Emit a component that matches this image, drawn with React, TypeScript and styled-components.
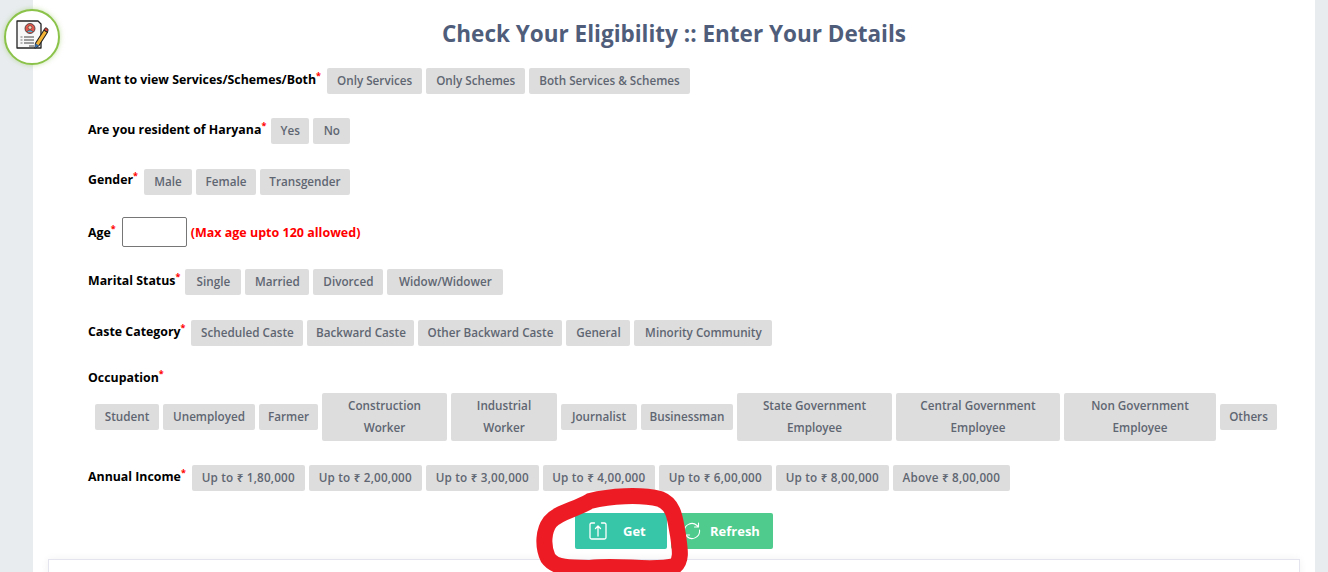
import React from "react";
import styled, { createGlobalStyle } from "styled-components";

const Global = createGlobalStyle`
  html, body { margin: 0; padding: 0; height: 572px; overflow: hidden; background: #e8ecef; }
  #root { height: 572px; overflow: hidden; }
`;

const Page = styled.div`
  position: relative;
  height: 572px;
  padding: 0 13px 0 33px;
  font-family: "Open Sans", "Noto Sans", sans-serif;
  overflow: hidden;
`;

const Card = styled.main`
  background: #fff;
  height: 572px;
  padding-top: 17px;
`;

const Title = styled.h1`
  margin: 0;
  height: 34px;
  line-height: 34px;
  font-size: 22.5px;
  font-weight: 700;
  color: #4f5d7b;
  text-align: center;
`;

const Form = styled.div`
  padding: 17px 0 0 55px;
`;

const Row = styled.div<{ $gap?: number; $h?: number }>`
  display: flex;
  align-items: center;
  height: ${(p) => p.$h ?? 26}px;
  margin-bottom: ${(p) => p.$gap ?? 24}px;
`;

const Label = styled.label<{ $mr?: number; $top?: number }>`
  font-size: 12.35px;
  font-weight: 700;
  color: #000;
  margin-right: ${(p) => p.$mr ?? 6}px;
  position: relative;
  top: ${(p) => p.$top ?? -2}px;
  white-space: nowrap;
`;

const Star = styled.sup`
  color: #f00;
  font-size: 9px;
  line-height: 0;
`;

const Choice = styled.button<{ $w?: number }>`
  border: 0;
  border-radius: 2px;
  background: #dddddd;
  color: #5f6672;
  font-family: inherit;
  font-size: 11.7px;
  font-weight: 600;
  line-height: 22px;
  padding: 1px ${(p) => (p.$w ? 6 : 10)}px 3px;
  margin: 0 4px 0 0;
  white-space: ${(p) => (p.$w ? "normal" : "nowrap")};
  width: ${(p) => (p.$w ? `${p.$w}px` : "auto")};
  flex: none;
`;

const MoneyChoice = styled(Choice)`
  letter-spacing: 0.2px;
  white-space: nowrap;
`;

const AgeInput = styled.input`
  box-sizing: border-box;
  width: 65px;
  height: 30px;
  border: 1px solid #767676;
  border-radius: 2px;
  background: #fff;
  margin-right: 4px;
`;

const Hint = styled.span`
  color: #f00;
  font-size: 12.5px;
  font-weight: 700;
`;

const OccupationBlock = styled.div`
  margin-bottom: 24px;
`;

const OccupationLabel = styled.div`
  height: 21px;
  margin-top: 25px;
  display: flex;
  align-items: flex-start;
`;

const OccupationRow = styled.div`
  display: flex;
  align-items: center;
  padding-left: 7px;
  height: 49px;
`;

const Actions = styled.div`
  display: flex;
  gap: 4px;
  margin: 22px 0 0 487px;
`;

const Action = styled.button<{ $bg: string; $w: number; $pad: number; $gap: number }>`
  display: flex;
  align-items: center;
  gap: ${(p) => p.$gap}px;
  box-sizing: border-box;
  width: ${(p) => p.$w}px;
  height: 36px;
  border: 0;
  border-radius: 2px;
  background: ${(p) => p.$bg};
  color: #fff;
  font-family: inherit;
  font-size: 13px;
  font-weight: 700;
  padding: 0 0 0 ${(p) => p.$pad}px;
`;

const Panel = styled.section`
  height: 60px;
  margin: 10px 15px 0;
  background: #fff;
  border: 1px solid #e4e4ee;
  box-shadow: 0 0 8px rgba(0, 0, 0, 0.06);
`;

const Badge = styled.div`
  position: absolute;
  left: 4px;
  top: 9px;
  width: 56px;
  height: 56px;
  box-sizing: border-box;
  border: 2px solid #8bc34a;
  border-radius: 50%;
  background: #fff;
  box-shadow: 0 0 5px rgba(139, 195, 74, 0.5);
  display: flex;
  align-items: center;
  justify-content: center;
`;

const Scribble = styled.svg`
  position: absolute;
  left: 520px;
  top: 480px;
  pointer-events: none;
`;

const req = <Star>*</Star>;

const incomes: [string, number][] = [
  ["1,80,000", 113],
  ["2,00,000", 113],
  ["3,00,000", 113],
  ["4,00,000", 112],
  ["6,00,000", 113],
  ["8,00,000", 113],
];

export default function App() {
  return (
    <Page>
      <Global />
      <Card>
        <Title>Check Your Eligibility :: Enter Your Details</Title>
        <Form>
          <Row>
            <Label>Want to view Services/Schemes/Both{req}</Label>
            <Choice>Only Services</Choice>
            <Choice>Only Schemes</Choice>
            <Choice>Both Services &amp; Schemes</Choice>
          </Row>
          <Row>
            <Label $mr={5}>Are you resident of Haryana{req}</Label>
            <Choice $w={38}>Yes</Choice>
            <Choice $w={37}>No</Choice>
          </Row>
          <Row $h={27} $gap={22}>
            <Label>Gender{req}</Label>
            <Choice $w={48}>Male</Choice>
            <Choice $w={60}>Female</Choice>
            <Choice $w={90}>Transgender</Choice>
          </Row>
          <Row $h={30} $gap={22}>
            <Label $top={0}>Age{req}</Label>
            <AgeInput />
            <Hint>(Max age upto 120 allowed)</Hint>
          </Row>
          <Row $gap={25}>
            <Label $mr={5}>Marital Status{req}</Label>
            <Choice $w={56}>Single</Choice>
            <Choice $w={64}>Married</Choice>
            <Choice $w={70}>Divorced</Choice>
            <Choice $w={116}>Widow/Widower</Choice>
          </Row>
          <Row $gap={0}>
            <Label>Caste Category{req}</Label>
            <Choice $w={112}>Scheduled Caste</Choice>
            <Choice $w={107}>Backward Caste</Choice>
            <Choice $w={144}>Other Backward Caste</Choice>
            <Choice $w={64}>General</Choice>
            <Choice $w={138}>Minority Community</Choice>
          </Row>
          <OccupationBlock>
            <OccupationLabel>
              <Label>Occupation{req}</Label>
            </OccupationLabel>
            <OccupationRow>
              <Choice $w={64}>Student</Choice>
              <Choice $w={92}>Unemployed</Choice>
              <Choice $w={59}>Farmer</Choice>
              <Choice $w={125}>Construction Worker</Choice>
              <Choice $w={106}>Industrial Worker</Choice>
              <Choice $w={76}>Journalist</Choice>
              <Choice $w={92}>Businessman</Choice>
              <Choice $w={155}>State Government Employee</Choice>
              <Choice $w={164}>Central Government Employee</Choice>
              <Choice $w={152}>Non Government Employee</Choice>
              <Choice $w={57}>Others</Choice>
            </OccupationRow>
          </OccupationBlock>
          <Row $gap={0}>
            <Label>Annual Income{req}</Label>
            {incomes.map(([v, w]) => (
              <MoneyChoice key={v} $w={w}>Up to ₹ {v}</MoneyChoice>
            ))}
            <MoneyChoice $w={117}>Above ₹ 8,00,000</MoneyChoice>
          </Row>
          <Actions>
            <Action $bg="#38c6a8" $w={92} $pad={14} $gap={16}>
              <svg width="18" height="18" viewBox="0 0 18 18" fill="none" stroke="#fff" strokeWidth="1.3" strokeLinecap="round" strokeLinejoin="round">
                <path d="M5.500 1H2.500A1.500 1.500 0 0 0 1 2.500v13A1.500 1.500 0 0 0 2.500 17h13a1.500 1.500 0 0 0 1.500-1.500v-13A1.500 1.500 0 0 0 15.500 1H12.500" />
                <path d="M9 14V4M6.500 6.500 9 4l2.500 2.500" />
              </svg>
              Get
            </Action>
            <Action $bg="#4ecb8d" $w={102} $pad={12} $gap={9}>
              <svg width="18" height="18" viewBox="0 0 18 18" fill="none" stroke="#fff" strokeWidth="1.1" strokeLinecap="round" strokeLinejoin="round">
                <path d="M1.500 10a7.500 7.500 0 0 1 12.500-6.500L15.500 5M15.500 1v4h-4" />
                <path d="M16.500 8a7.500 7.500 0 0 1-12.500 6.500L2.500 13M2.500 17v-4h4" />
              </svg>
              Refresh
            </Action>
          </Actions>
        </Form>
        <Panel />
      </Card>
      <Badge>
        <svg width="40" height="40" viewBox="0 0 40 40">
          <path d="M5 4h21l3 3v24H5z" fill="#f8f8f8" stroke="#222" strokeWidth="1.3" strokeLinejoin="round" />
          <circle cx="18" cy="11.500" r="5" fill="#e2574c" stroke="#333" strokeWidth=".8" />
          <circle cx="18" cy="10.500" r="1.800" fill="#f6d5b8" stroke="#333" strokeWidth=".5" />
          <path d="M15 15c.8-2.500 5.200-2.500 6 0" fill="#5bb6d9" stroke="#333" strokeWidth=".5" />
          <path d="M12 20h10M12 23h10M12 26h10M17 29h5" stroke="#444" strokeWidth="1" />
          <path d="M8.500 20h2M8.500 23h2M8.500 26h2" stroke="#777" strokeWidth="1" />
          <path d="M32 13l3.500 2.200-8.500 13.300-4 2.500.5-4.700z" fill="#f5b335" stroke="#222" strokeWidth="1.100" strokeLinejoin="round" />
          <path d="M32 13l1.200-2c.5-.8 3.300 1 2.900 2l-.6 2.200z" fill="#d9453c" stroke="#222" strokeWidth=".9" />
          <path d="M23.500 26.300l3.500 2.200-4 2.500z" fill="#3b6ea8" />
        </svg>
      </Badge>
      <Scribble width="180" height="92" viewBox="0 0 180 92" fill="none">
        <path
          d="M70 21C90 16 120 14 140 19C155 25 155 40 158 55C160 70 162 80 155 86C130 92 100 84 70 88C50 88 35 88 28 78C22 65 24 50 30 42C38 32 55 30 70 21Z"
          stroke="#ed1c24"
          strokeWidth="16"
          strokeLinejoin="round"
        />
      </Scribble>
    </Page>
  );
}
